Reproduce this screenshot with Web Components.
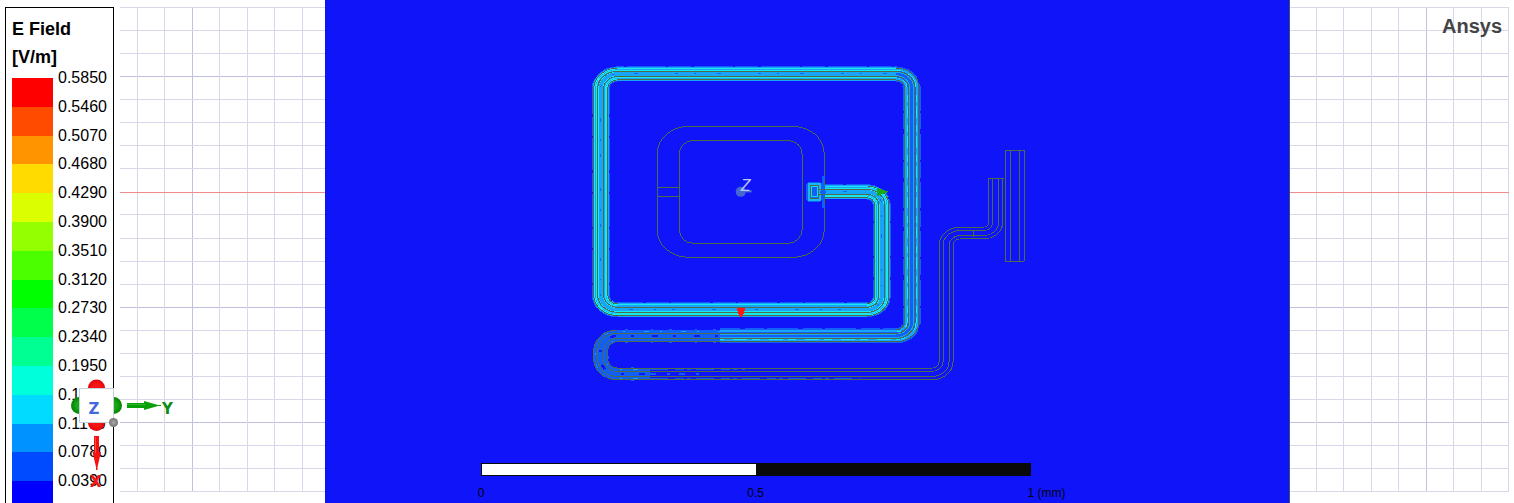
<!DOCTYPE html>
<html lang="en">
<head>
<meta charset="utf-8">
<title>E Field plot</title>
<style>
html, body { margin: 0; height: 100%; background: #fff; overflow: hidden; }
body { font-family: "Liberation Sans", Arial, sans-serif; }
</style>
</head>
<body>
<field-viewer></field-viewer>

<template id="viewer">
<style>
:host { display: flex; position: relative; height: 100vh; overflow: hidden; }
field-legend { flex: none; margin: 7px 6px 0 5px; }
.left { flex: 205 1 0; }
field-plot { flex: 965 1 0; }
.right { flex: 224 1 0; }
axis-triad { position: absolute; left: 70px; top: 370px; }
.brand { font-size: 20px; line-height: 24px; font-weight: bold; color: #444; }
</style>
<field-legend></field-legend>
<grid-sheet class="left" first="17" major="2" end="205"></grid-sheet>
<field-plot></field-plot>
<grid-sheet class="right" first="26" major="4" end="219"><span class="brand">Ansys</span></grid-sheet>
<axis-triad></axis-triad>
</template>

<template id="legend">
<style>
:host { display: block; box-sizing: border-box; width: 109px; height: calc(100vh - 7px); padding: 7px 6px 0; border: 1px solid #000; border-bottom: 0; overflow: hidden; color: #000; }
h2 { margin: 0 0 7px; font-size: 18px; line-height: 28px; font-weight: bold; }
ul { list-style: none; margin: 0; padding: 0; height: 432px; display: grid; grid-template-rows: repeat(15, 1fr); }
li { display: grid; grid-template-columns: 41px 1fr; column-gap: 5px; font-size: 16px; line-height: 20px; }
.label { margin-top: -10px; }
</style>
<h2>E Field<br>[V/m]</h2>
<ul></ul>
</template>

<template id="sheet">
<style>
:host { display: block; position: relative; overflow: hidden; }
svg { position: absolute; inset: 0; width: 100%; height: 100%; }
.content { position: relative; display: flex; justify-content: flex-end; padding: 14px 12px 0 0; }
</style>
<svg aria-hidden="true" shape-rendering="crispEdges"></svg>
<div class="content"><slot></slot></div>
</template>

<template id="scale">
<style>
:host { display: block; color: #04040c; }
.bar { display: flex; height: 11px; border: 1px solid #0a0a0a; background: #0a0a0a; }
.bar i { width: 50%; background: #fff; }
.labels { display: flex; justify-content: space-between; margin-top: 9px; font-size: 12px; line-height: 16px; white-space: nowrap; }
.labels span { display: flex; width: 6px; margin: 0 -3px; }
.labels .mid { justify-content: center; }
</style>
<div class="bar"><i></i></div>
<div class="labels"><span>0</span><span class="mid">0.5</span><span>1 (mm)</span></div>
</template>

<template id="plot">
<style>
:host { display: flex; flex-direction: column; justify-content: flex-end; position: relative; box-sizing: border-box; padding-bottom: 2px; background: #1014f8; overflow: hidden; border-right: 1px solid #3a5068; }
svg { position: absolute; inset: 0; width: 100%; height: 100%; }
scale-bar { position: relative; width: 57%; margin-left: 156px; }
path, rect, line { fill: none; }
.o { stroke: #4d6b48; }
.z { font: italic 16px "Liberation Sans", Arial, sans-serif; fill: #b9c8f4; }
</style>
<svg viewBox="325 0 965 503" preserveAspectRatio="xMidYMin meet" shape-rendering="crispEdges">
  <defs>
    <path id="bright" d="M820 0H867A15 15 0 0 1 882 15V125.500A15 15 0 0 1 867 140.500H618A17 17 0 0 1 601 123.500V-123.500A17 17 0 0 1 618 -140.500H896"/>
    <path id="side" d="M894 -140.500H896A16 16 0 0 1 912 -124.500V155.500A16 16 0 0 1 896 171.500H720"/>
    <path id="dim" d="M760 171.500H618A17 17 0 0 0 601 188.500V200A17 17 0 0 0 618 217H650"/>
    <path id="off" d="M640 217H932A14.500 14.500 0 0 0 946.500 202.500V63.500A14.500 14.500 0 0 1 961 49H984A12 12 0 0 0 996 37V-16"/>
  </defs>
  <g class="o" stroke-width="1">
    <rect x="657.500" y="126.500" width="167" height="131" rx="31" ry="27"/>
    <rect x="679.500" y="140.500" width="123" height="103" rx="14"/>
    <path d="M658 187.500H679M658 196.500H679"/>
    <path d="M1005.500 150.500H1024.500V261.500H1005.500ZM1010.500 150V261M1019.500 150V261"/>
  </g>
  <g id="trace" transform="translate(0 192) scale(1 .84)"></g>
  <path class="o" d="M973.500 231V237M988 178.500H1004"/>
  <g>
    <path d="M824 176V208" stroke="#1060f8" stroke-width="3"/>
    <rect x="808.500" y="184.500" width="12" height="15" rx="2" stroke="#1060f8" stroke-width="5"/>
    <rect x="809" y="184" width="11" height="16" stroke="#18b8f8" stroke-width="2"/>
    <rect x="812" y="187" width="6" height="10" style="fill:#1060f8" stroke="#18d8f8"/>
    <rect class="o" x="810.500" y="185.500" width="8" height="13"/>
    <path class="o" d="M819 189.500H826M819 194.500H826M824.500 179V185M824.500 198V205"/>
    <path d="M820 192H826" stroke="#1060f8" stroke-width="2"/>
  </g>
  <path d="M877 188L883 190L890 192L883 194L877 197Z" style="fill:#18a818"/>
  <path d="M737 308H746L743 316L741 318L739 315Z" style="fill:#ff1818"/>
  <g shape-rendering="auto">
    <path d="M741 191.500H752" stroke="#4a70d8" stroke-width="2"/>
    <circle cx="741" cy="192" r="5" fill="#4668d0"/>
    <text class="z" x="741" y="191">Z</text>
  </g>
</svg>
<scale-bar></scale-bar>
</template>

<template id="triad">
<style>
:host { display: block; width: 110px; height: 125px; }
svg { display: block; width: 110px; height: 125px; }
text { font: bold 15px "DejaVu Sans", Verdana, sans-serif; text-anchor: middle; }
</style>
<svg viewBox="70 370 110 125">
  <defs>
    <radialGradient id="r"><stop offset=".5" stop-color="#f61414"/><stop offset="1" stop-color="#dc0808"/></radialGradient>
    <radialGradient id="g"><stop offset=".4" stop-color="#16a816"/><stop offset="1" stop-color="#058005"/></radialGradient>
    <radialGradient id="s"><stop offset="0" stop-color="#aaa"/><stop offset="1" stop-color="#747474"/></radialGradient>
  </defs>
  <circle cx="96.500" cy="388" r="8.500" fill="url(#r)"/>
  <circle cx="96.500" cy="422.500" r="8.500" fill="url(#r)"/>
  <circle cx="79.500" cy="405.500" r="8.500" fill="url(#g)"/>
  <circle cx="113.500" cy="405.500" r="8.500" fill="url(#g)"/>
  <rect x="79.500" y="388.500" width="34" height="34" fill="#fff" stroke="#c4d2dc"/>
  <circle cx="113.500" cy="422.500" r="4.500" fill="url(#s)"/>
  <path d="M94 436H99V452H101L97.500 467V470H96V467L92.500 452H94Z" fill="#f81010"/>
  <path d="M95.500 437V453" stroke="#ff5040"/>
  <path d="M127 403H144V401L158 405H161V406H158L144 410V408H127Z" fill="#08a008"/>
  <path d="M127 404.500H145" stroke="#30b830"/>
  <text x="94" y="414" fill="#4468dc">Z</text>
  <text x="167.500" y="414" fill="#108c10">Y</text>
  <text x="95.500" y="487" fill="#f61414">X</text>
</svg>
</template>

<script>
class TemplateElement extends HTMLElement {
  constructor() {
    super();
    const root = this.attachShadow({ mode: "open" });
    root.append(document.getElementById(this.constructor.template).content.cloneNode(true));
  }
}

class FieldLegend extends TemplateElement {
  static template = "legend";
  connectedCallback() {
    const colors = ["#ff0000", "#ff4b00", "#ff9300", "#ffdb00", "#dbff00", "#93ff00", "#4bff00", "#00ff00",
      "#00ff4b", "#00ff93", "#00ffdb", "#00dbff", "#0093ff", "#004bff", "#0000ff"];
    this.shadowRoot.querySelector("ul").innerHTML = colors.map((c, i) =>
      `<li><span style="background:${c}"></span><span class="label">${(0.585 - i * 0.039).toFixed(4)}</span></li>`).join("");
  }
}

class GridSheet extends TemplateElement {
  static template = "sheet";
  connectedCallback() {
    const first = +this.getAttribute("first"), major = +this.getAttribute("major"), end = +this.getAttribute("end");
    const light = [], dark = [];
    for (let i = 0; first + i * 27.43 <= end + 1; i++)
      (i === major ? dark : light).push(`M${Math.round(first + i * 27.43) + .5} 7V492`);
    for (let i = 0; i < 22; i++)
      if (i !== 8) (i % 5 === 3 ? dark : light).push(`M0 ${Math.round(7 + i * 23.05) + .5}H${end}`);
    this.shadowRoot.querySelector("svg").innerHTML =
      `<path d="${dark.join("")}" stroke="#c0c0e0"/><path d="${light.join("")}" stroke="#d8d8ea"/>` +
      `<path d="M0 192.5H${end}" stroke="#f08c8c"/>`;
  }
}

class ScaleBar extends TemplateElement { static template = "scale"; }

class FieldPlot extends TemplateElement {
  static template = "plot";
  connectedCallback() {
    const olive = "#4d6b48", bg = "#1014f8", deep = "#1060f8", mid = "#18a4f8", cyan = "#18e8f0";
    // Each layer is [stroke width, colour, dash pattern], painted from the widest to the narrowest.
    const layers = {
      off: [[15, olive], [13, bg], [7, olive], [5, bg]],
      dim: [[16, deep, "3 16 2 23"], [15, olive], [13, deep], [11, mid, "5 19 2 11"], [10, deep], [7, olive], [5, deep], [3, bg, "3 15 6 18"]],
      side: [[18, deep, "19 5 31 3"], [16, deep], [15, olive], [13, mid], [10, cyan, "8 5 14 9"], [8, deep], [7, olive], [5, mid], [3, deep]],
      bright: [[18, deep, "23 3 39 2"], [16, mid], [15, olive], [13, cyan], [11, mid], [10, cyan], [8, mid], [7, olive], [5, cyan], [4, mid], [1, deep, "2 21 4 37 3 16"]]
    };
    this.shadowRoot.getElementById("trace").innerHTML = ["off", "dim", "side", "bright"].map(name =>
      layers[name].map(([w, c, dash]) =>
        `<use href="#${name}" stroke="${c}" stroke-width="${w}"${dash ? ` stroke-dasharray="${dash}"` : ""}/>`).join("")).join("") +
      `<path d="M650 211.500H745M650 222.500H860" stroke="${deep}" stroke-dasharray="18 7 9 3 4 5"/>` +
      `<path d="M650 217H700" stroke="${deep}" stroke-width="2" stroke-dasharray="6 11 3 9"/>`;
  }
}

class AxisTriad extends TemplateElement { static template = "triad"; }
class FieldViewer extends TemplateElement { static template = "viewer"; }

customElements.define("field-legend", FieldLegend);
customElements.define("grid-sheet", GridSheet);
customElements.define("scale-bar", ScaleBar);
customElements.define("field-plot", FieldPlot);
customElements.define("axis-triad", AxisTriad);
customElements.define("field-viewer", FieldViewer);
</script>
</body>
</html>
